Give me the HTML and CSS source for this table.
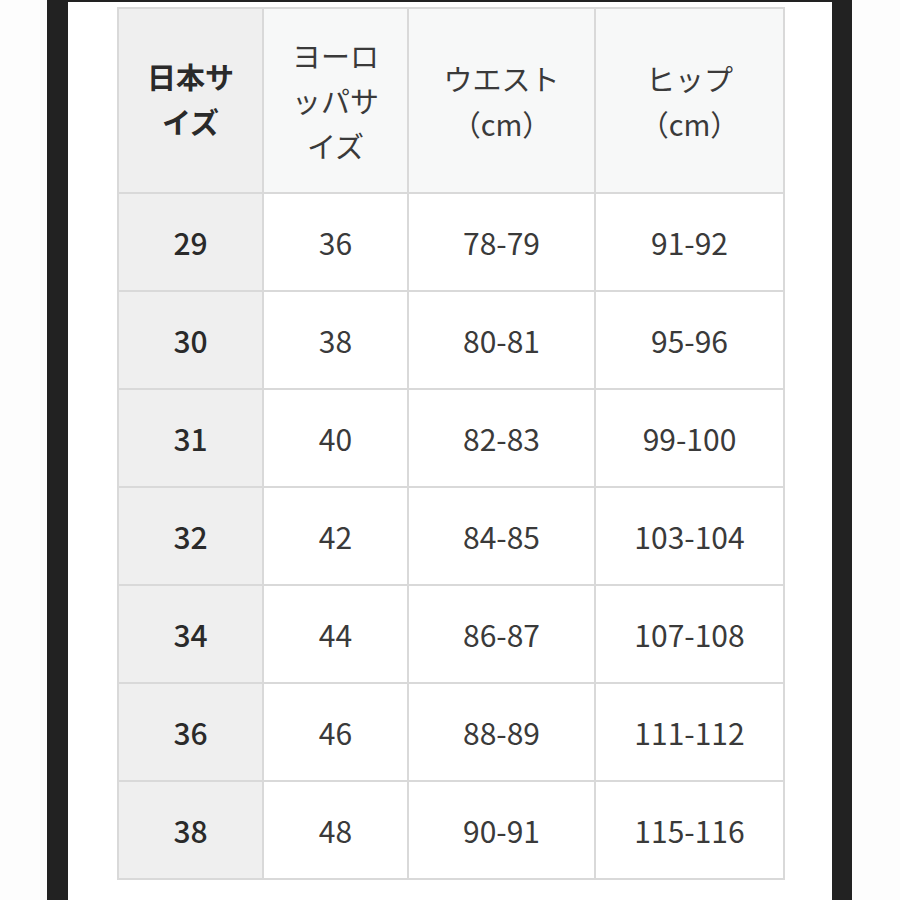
FILE: index.html
```html
<!DOCTYPE html>
<html lang="ja">
<head>
<meta charset="utf-8">
<link rel="stylesheet" href="styles.css">
</head>
<body>
<div class="frame">
  <div class="sheet">
    <div class="grid">
      <div class="cell head key">日本サ<br>イズ</div>
      <div class="cell head">ヨーロ<br>ッパサ<br>イズ</div>
      <div class="cell head">ウエスト<br>（cm）</div>
      <div class="cell head">ヒップ<br>（cm）</div>

      <div class="cell key">29</div><div class="cell">36</div><div class="cell">78-79</div><div class="cell">91-92</div>
      <div class="cell key">30</div><div class="cell">38</div><div class="cell">80-81</div><div class="cell">95-96</div>
      <div class="cell key">31</div><div class="cell">40</div><div class="cell">82-83</div><div class="cell">99-100</div>
      <div class="cell key">32</div><div class="cell">42</div><div class="cell">84-85</div><div class="cell">103-104</div>
      <div class="cell key">34</div><div class="cell">44</div><div class="cell">86-87</div><div class="cell">107-108</div>
      <div class="cell key">36</div><div class="cell">46</div><div class="cell">88-89</div><div class="cell">111-112</div>
      <div class="cell key">38</div><div class="cell">48</div><div class="cell">90-91</div><div class="cell">115-116</div>
    </div>
  </div>
</div>
</body>
</html>
```

FILE: styles.css
```css
html, body {
  margin: 0;
  padding: 0;
  background: #fdfdfd;
}
body {
  font-family: "Noto Sans CJK JP", "Noto Sans", sans-serif;
  color: #3a3a3a;
}
.frame {
  margin-left: 47px;
  width: 764px;
  height: 898px;
  border-left: 21px solid #222222;
  border-right: 20px solid #222222;
  border-top: 2px solid #222222;
  background: #ffffff;
  overflow: hidden;
}
.sheet {
  padding: 5px 0 0 49px;
}
.grid {
  display: grid;
  grid-template-columns: 143px 143px 185px 187px;
  grid-template-rows: 183px repeat(7, 96px);
  gap: 2px;
  padding: 2px;
  background: #d9d9d9;
  width: max-content;
}
.cell {
  background: #ffffff;
  display: flex;
  align-items: center;
  justify-content: center;
  text-align: center;
  font-size: 30px;
  line-height: 45px;
  letter-spacing: 0;
}
.head {
  background: #f7f8f8;
  font-size: 29px;
  color: #3a3a3a;
}
.key {
  background: #efefef;
  font-weight: 500;
  color: #2a2a2a;
}
.head.key {
  background: #efefef;
  font-weight: 700;
  padding-bottom: 4px;
}
```
